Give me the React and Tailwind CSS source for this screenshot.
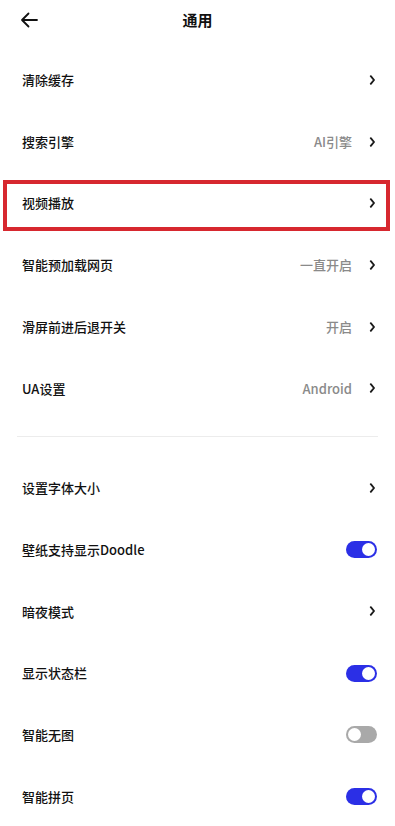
import { useState } from "react";

const font = { fontFamily: '"Noto Sans CJK SC", "Noto Sans", sans-serif' };

const Chevron = () => (
  <svg width="7" height="10" viewBox="0 0 7 10" className="shrink-0 mr-[1px]">
    <path d="M1.8 1.2 L5 5 L1.8 8.8" fill="none" stroke="#1a1a1a" strokeWidth="1.9" strokeLinecap="round" strokeLinejoin="round" />
  </svg>
);

const Toggle = ({ on }) => (
  <div
    className={`w-[31px] h-[17px] rounded-full flex items-center px-[2px] ${
      on ? "bg-[#2b2fe6] justify-end" : "bg-[#a9a9a9] justify-start"
    }`}
  >
    <div className="w-[13px] h-[13px] rounded-full bg-white" />
  </div>
);

const Row = ({ label, value, toggle, highlight }) => (
  <div className="relative h-[61.7px] flex items-center pl-[22px] pr-[18px]">
    <span className="flex-1 text-[13px] font-medium text-[#111]">{label}</span>
    {value && <span className="text-[13px] font-medium text-[#8a8a8a] mr-[17px]">{value}</span>}
    {toggle !== undefined ? <Toggle on={toggle} /> : <Chevron />}
    {highlight && (
      <div className="absolute left-[3px] right-[5px] top-[8px] bottom-[3px] border-[4px] border-[#d7282f] pointer-events-none" />
    )}
  </div>
);

export default function App() {
  const [items] = useState([
    { label: "清除缓存" },
    { label: "搜索引擎", value: "AI引擎" },
    { label: "视频播放", highlight: true },
    { label: "智能预加载网页", value: "一直开启" },
    { label: "滑屏前进后退开关", value: "开启" },
    { label: "UA设置", value: "Android" },
  ]);
  const more = [
    { label: "设置字体大小" },
    { label: "壁纸支持显示Doodle", toggle: true },
    { label: "暗夜模式" },
    { label: "显示状态栏", toggle: true },
    { label: "智能无图", toggle: false },
    { label: "智能拼页", toggle: true },
  ];

  return (
    <div className="w-[395px] h-[826px] bg-white overflow-hidden" style={font}>
      <div className="relative h-[49px] flex items-start justify-center pt-[8px]">
        <svg width="18" height="16" viewBox="0 0 18 16" className="absolute left-[20px] top-[12px]">
          <path d="M17 8 H2 M8.5 1.5 L2 8 L8.5 14.5" fill="none" stroke="#111" strokeWidth="1.8" strokeLinecap="round" strokeLinejoin="round" />
        </svg>
        <span className="text-[15px] font-bold text-[#111] leading-[24px]">通用</span>
      </div>
      {items.map((it) => (
        <Row key={it.label} {...it} />
      ))}
      <div className="mx-[17px] mt-[17px] mb-[20px] h-px bg-[#ececec]" />
      {more.map((it) => (
        <Row key={it.label} {...it} />
      ))}
    </div>
  );
}
